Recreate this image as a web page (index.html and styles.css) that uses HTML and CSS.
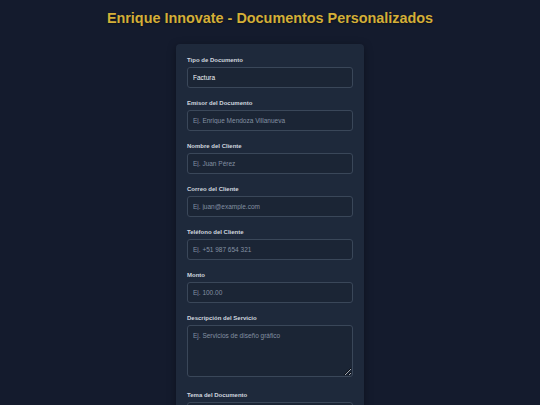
FILE: index.html
```html
<!DOCTYPE html>
<html lang="es">
<head>
<meta charset="utf-8">
<title>Enrique Innovate - Documentos Personalizados</title>
<link rel="stylesheet" href="styles.css">
</head>
<body>
<h1 class="title">Enrique Innovate - Documentos Personalizados</h1>
<form class="card">
  <div class="field">
    <label class="label">Tipo de Documento</label>
    <select class="input select"><option>Factura</option></select>
  </div>
  <div class="field">
    <label class="label">Emisor del Documento</label>
    <input class="input" placeholder="Ej. Enrique Mendoza Villanueva">
  </div>
  <div class="field">
    <label class="label">Nombre del Cliente</label>
    <input class="input" placeholder="Ej. Juan Pérez">
  </div>
  <div class="field">
    <label class="label">Correo del Cliente</label>
    <input class="input" placeholder="Ej. juan@example.com">
  </div>
  <div class="field">
    <label class="label">Teléfono del Cliente</label>
    <input class="input" placeholder="Ej. +51 987 654 321">
  </div>
  <div class="field">
    <label class="label">Monto</label>
    <input class="input" placeholder="Ej. 100.00">
  </div>
  <div class="field field-tall">
    <label class="label">Descripción del Servicio</label>
    <textarea class="input textarea" placeholder="Ej. Servicios de diseño gráfico"></textarea>
  </div>
  <div class="field">
    <label class="label">Tema del Documento</label>
    <select class="input select"><option>Moderno</option></select>
  </div>
</form>
</body>
</html>
```
FILE: styles.css
```css
html, body {
  margin: 0;
  padding: 0;
  background: #141b2d;
}
body {
  font-family: "Liberation Sans", Arial, sans-serif;
  color: #e2e8f0;
}
.title {
  margin: 8px 0 16px;
  font-size: 14.4px;
  line-height: 20px;
  font-weight: bold;
  text-align: center;
  color: #d4af37;
  text-shadow: 0 1px 2px rgba(0,0,0,0.4);
}
.card {
  width: 188px;
  box-sizing: border-box;
  margin: 0 auto;
  padding: 12px 11px;
  background: #1e293b;
  border-radius: 4px;
  box-shadow: 0 2px 8px rgba(0,0,0,0.35);
  display: flex;
  flex-direction: column;
  gap: 11px;
}
.field {
  display: flex;
  flex-direction: column;
  gap: 3px;
}
.field-tall {
  padding-bottom: 3px;
}
.label {
  font-size: 6px;
  line-height: 8px;
  font-weight: bold;
  color: #cfd6df;
}
.input {
  box-sizing: border-box;
  height: 21px;
  width: 100%;
  margin: 0;
  padding: 0 5px;
  font-family: "Liberation Sans", Arial, sans-serif;
  font-size: 6.5px;
  color: #e2e8f0;
  background: #1b2535;
  border: 1px solid #3a4759;
  border-radius: 3px;
  outline: none;
}
.input::placeholder {
  color: #8390a2;
}
.select {
  appearance: none;
  -webkit-appearance: none;
  color: #f1f5f9;
}
.textarea {
  height: 52px;
  padding: 5px;
  resize: vertical;
  line-height: 9px;
}
```
